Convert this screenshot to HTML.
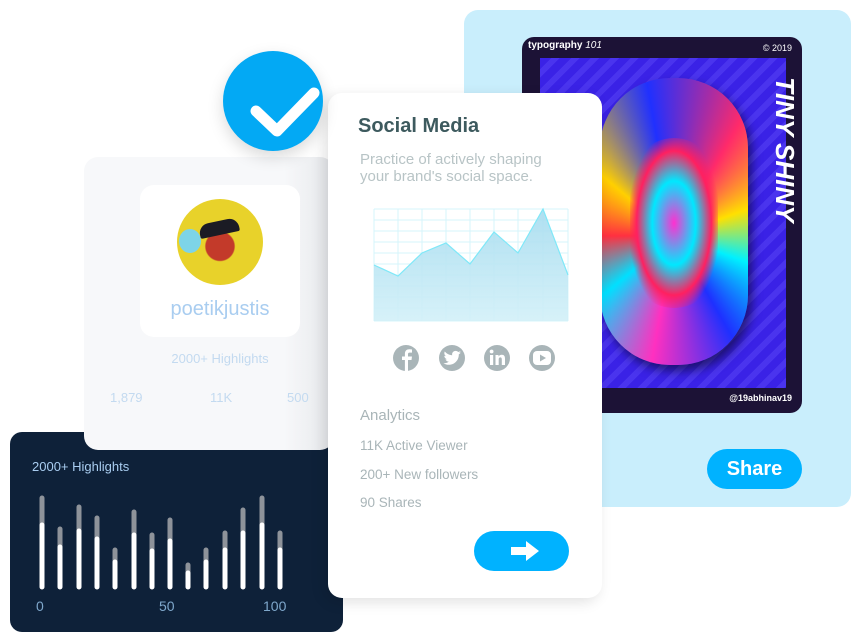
<!DOCTYPE html>
<html><head><meta charset="utf-8"><style>
*{margin:0;padding:0;box-sizing:border-box}
body{width:861px;height:640px;background:#fff;position:relative;overflow:hidden;font-family:"Liberation Sans",sans-serif}
.abs{position:absolute}
</style></head><body>
<div class="abs" style="left:464px;top:10px;width:387px;height:497px;background:#c9eefc;border-radius:14px"></div>
<div class="abs" style="left:522px;top:37px;width:280px;height:376px;background:#1c1236;border-radius:12px;overflow:hidden">
  <div class="abs" style="left:18px;top:21px;width:246px;height:330px;background:repeating-linear-gradient(135deg,#3a22e6 0 8px,#4a34ee 8px 14px)"></div>
  <div class="abs" style="left:6px;top:3px;color:#fff;font-size:10px;font-weight:bold">typography <i style="font-weight:normal">101</i></div>
  <div class="abs" style="right:10px;top:6px;color:#fff;font-size:9px">© 2019</div>
  <div class="abs" style="right:10px;bottom:10px;color:#fff;font-size:9px;font-weight:bold">@19abhinav19</div>
  <div class="abs" style="left:254px;top:40px;width:24px;height:300px;color:#fff;font-weight:bold;font-style:italic;font-size:26px;writing-mode:vertical-rl">TINY SHINY</div>
  <div class="abs" style="left:78px;top:41px;width:148px;height:287px;border-radius:70px;background:conic-gradient(from 30deg at 50% 55%,#ff2a6a,#ffe000,#00f0ff,#1e30ff,#ff30c0,#00e0ff,#ff3040,#ffd000,#2030ff,#ff2a6a);box-shadow:4px 6px 10px rgba(0,0,0,.5)">
    <div class="abs" style="left:30px;top:60px;width:88px;height:170px;border-radius:44px;background:radial-gradient(ellipse,#ff30d0 0,#00e8ff 35%,#ff2060 60%,transparent 75%)"></div>
  </div>
</div>
<div class="abs" style="left:707px;top:449px;width:95px;height:40px;background:#00b2ff;border-radius:20px;color:#fff;font-weight:bold;font-size:20px;text-align:center;line-height:40px">Share</div>

<div class="abs" style="left:10px;top:432px;width:333px;height:200px;background:#0e2139;border-radius:12px"></div>
<div class="abs" style="left:84px;top:157px;width:250px;height:293px;background:linear-gradient(90deg,#f7f8fa 80%,#e6e8eb);border-radius:14px"></div>
<div class="abs" style="left:140px;top:185px;width:160px;height:152px;background:#fff;border-radius:14px"></div>
<div class="abs" style="left:177px;top:199px;width:86px;height:86px;border-radius:50%;background:radial-gradient(circle at 50% 55%,#c33a2a 0 22%,#e8d22a 24%);overflow:hidden">
  <div class="abs" style="left:22px;top:22px;width:40px;height:14px;background:#1b1b24;border-radius:10px 10px 2px 2px;transform:rotate(-12deg)"></div>
  <div class="abs" style="left:2px;top:30px;width:22px;height:24px;background:#7dd4e8;border-radius:50%"></div>
</div>
<div class="abs" style="left:140px;top:298px;width:160px;text-align:center;color:#a9cdf0;font-size:20px">poetikjustis</div>
<div class="abs" style="left:140px;top:351px;width:160px;text-align:center;color:#c3daf0;font-size:13px">2000+ Highlights</div>
<div class="abs" style="left:110px;top:390px;color:#c3daf0;font-size:13px">1,879</div>
<div class="abs" style="left:210px;top:390px;color:#c3daf0;font-size:13px">11K</div>
<div class="abs" style="left:287px;top:390px;color:#c3daf0;font-size:13px">500</div>

<div class="abs" style="left:32px;top:459px;color:#a9cdf0;font-size:13px">2000+ Highlights</div>
<svg class="abs" style="left:0;top:0" width="861" height="640">
<g stroke-linecap="round" stroke-width="5">
<g stroke="#8e939a">
<line x1="42" y1="498" x2="42" y2="586"/><line x1="60" y1="529" x2="60" y2="586"/><line x1="79" y1="507" x2="79" y2="586"/><line x1="97" y1="518" x2="97" y2="586"/><line x1="115" y1="550" x2="115" y2="586"/><line x1="134" y1="512" x2="134" y2="586"/><line x1="152" y1="535" x2="152" y2="586"/><line x1="170" y1="520" x2="170" y2="586"/><line x1="188" y1="565" x2="188" y2="586"/><line x1="206" y1="550" x2="206" y2="586"/><line x1="225" y1="533" x2="225" y2="586"/><line x1="243" y1="510" x2="243" y2="586"/><line x1="262" y1="498" x2="262" y2="586"/><line x1="280" y1="533" x2="280" y2="586"/>
</g>
<g stroke="#fff">
<line x1="42" y1="525" x2="42" y2="587"/><line x1="60" y1="547" x2="60" y2="587"/><line x1="79" y1="531" x2="79" y2="587"/><line x1="97" y1="539" x2="97" y2="587"/><line x1="115" y1="562" x2="115" y2="587"/><line x1="134" y1="535" x2="134" y2="587"/><line x1="152" y1="551" x2="152" y2="587"/><line x1="170" y1="541" x2="170" y2="587"/><line x1="188" y1="573" x2="188" y2="587"/><line x1="206" y1="562" x2="206" y2="587"/><line x1="225" y1="550" x2="225" y2="587"/><line x1="243" y1="533" x2="243" y2="587"/><line x1="262" y1="525" x2="262" y2="587"/><line x1="280" y1="550" x2="280" y2="587"/>
</g></g>
<g fill="#7fa8cc" font-size="14" font-family="Liberation Sans"><text x="36" y="611">0</text><text x="159" y="611">50</text><text x="263" y="611">100</text></g>
</svg>

<div class="abs" style="left:328px;top:93px;width:274px;height:505px;background:#fff;border-radius:14px;box-shadow:-4px 4px 14px rgba(0,0,0,.12)"></div>
<div class="abs" style="left:358px;top:115px;color:#3d5a5e;font-size:20px;font-weight:bold">Social Media</div>
<div class="abs" style="left:360px;top:151px;color:#b8c4c6;font-size:15px;line-height:17px">Practice of actively shaping<br>your brand's social space.</div>
<svg class="abs" style="left:0;top:0" width="861" height="640">
<defs><linearGradient id="g" x1="0" y1="0" x2="0" y2="1"><stop offset="0" stop-color="#a6dcef"/><stop offset="1" stop-color="#d2f0f8"/></linearGradient></defs>
<g stroke="#d6f4fb" stroke-width="1">
<path d="M374 209H568M374 220H568M374 231H568M374 242H568M374 253H568M374 264H568M374 275H568M374 286H568M374 297H568M374 308H568M374 321H568"/>
<path d="M374 209V321M398 209V321M422 209V321M446 209V321M470 209V321M494 209V321M518 209V321M543 209V321M568 209V321"/>
</g>
<path d="M374 265L398 276L422 253L446 243L470 264L494 232L518 253L543 209L568 275V321H374Z" fill="url(#g)" opacity=".9"/>
<path d="M374 265L398 276L422 253L446 243L470 264L494 232L518 253L543 209L568 275" fill="none" stroke="#7fe8f8" stroke-width="1.2"/>
<g fill="#a9b5b8"><circle cx="406" cy="358" r="13"/><circle cx="452" cy="358" r="13"/><circle cx="497" cy="358" r="13"/><circle cx="542" cy="358" r="13"/></g>
<path d="M408 371V360H411.5L412 356.5H408V354.3C408 353.3 408.3 352.6 409.8 352.6H412V349.5C411.6 349.4 410.5 349.3 409.3 349.3C406.7 349.3 404.9 350.9 404.9 353.8V356.5H402V360H404.9V371Z" fill="#fff"/>
<path d="M461 352.5C460.3 352.8 459.6 353 458.9 353.1C459.7 352.6 460.2 351.9 460.5 351.1C459.8 351.5 459 351.8 458.2 352C456.8 350.5 454.5 350.5 453.1 351.9C452.2 352.8 451.9 354 452.2 355.2C449.3 355.1 446.6 353.7 444.8 351.5C443.9 353.1 444.4 355.1 445.9 356.1C445.3 356.1 444.8 355.9 444.3 355.7C444.3 357.3 445.5 358.8 447.1 359.1C446.6 359.3 446 359.3 445.5 359.2C446 360.6 447.3 361.6 448.8 361.6C447.3 362.8 445.3 363.4 443.4 363.2C445 364.2 446.9 364.8 448.8 364.8C455.3 364.8 459 359.3 458.8 354.4C459.6 353.9 460.4 353.2 461 352.5Z" fill="#fff"/>
<g fill="#fff"><rect x="490" y="355" width="3.2" height="10"/><circle cx="491.6" cy="351.5" r="1.9"/><path d="M495.5 355H498.5V356.5C499.2 355.4 500.3 354.8 501.8 354.8C504.2 354.8 505 356.3 505 358.8V365H501.8V359.5C501.8 358.3 501.5 357.4 500.3 357.4C499.1 357.4 498.7 358.3 498.7 359.5V365H495.5Z"/></g>
<rect x="533" y="351" width="18" height="14" rx="4" fill="#fff"/><path d="M540 354.5V361.5L546 358Z" fill="#a9b5b8"/>
</svg>
<div class="abs" style="left:360px;top:407px;color:#a9b5b8;font-size:15px">Analytics</div>
<div class="abs" style="left:360px;top:438px;color:#a9b5b8;font-size:13.5px">11K Active Viewer</div>
<div class="abs" style="left:360px;top:467px;color:#a9b5b8;font-size:13.5px">200+ New followers</div>
<div class="abs" style="left:360px;top:495px;color:#a9b5b8;font-size:13.5px">90 Shares</div>
<div class="abs" style="left:474px;top:531px;width:95px;height:40px;background:#00b2ff;border-radius:20px"></div>
<svg class="abs" style="left:0;top:0" width="861" height="640"><path d="M511 547H526V541L539 551L526 561V555H511Z" fill="#fff"/></svg>

<div class="abs" style="left:223px;top:51px;width:100px;height:100px;border-radius:50%;background:#03a9f4;box-shadow:0 6px 16px rgba(0,0,0,.15)"></div>
<svg class="abs" style="left:0;top:0" width="861" height="640"><polyline points="256,111 277,131 314,93" fill="none" stroke="#fff" stroke-width="11" stroke-linecap="round" stroke-linejoin="round"/></svg>
</body></html>
